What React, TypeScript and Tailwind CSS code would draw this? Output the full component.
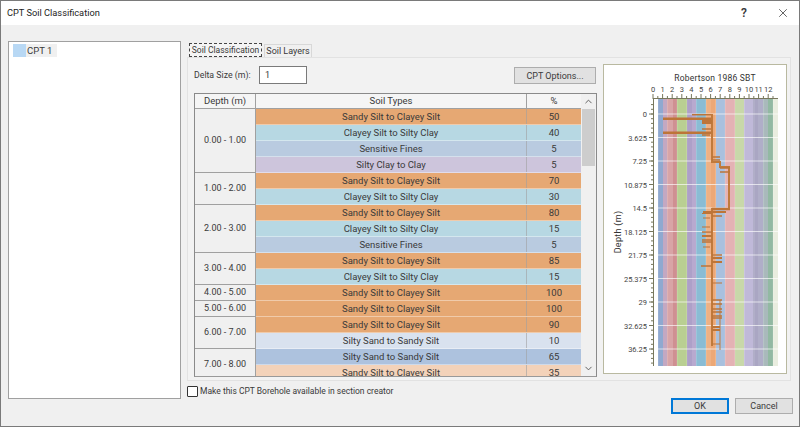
import { ChevronDown, ChevronUp, X } from "lucide-react";

const ORANGE = "bg-[#e6a873]";
const TEAL = "bg-[#b7d8e3]";
const STEEL = "bg-[#b9cbe0]";
const MAUVE = "bg-[#cdc5dc]";
const PALE = "bg-[#d9e2ef]";
const BLUE = "bg-[#adc2de]";
const PEACH = "bg-[#f3d2b9]";

const groups = [
  {
    depth: "0.00 - 1.00",
    rows: [
      { soil: "Sandy Silt to Clayey Silt", pct: "50", color: ORANGE },
      { soil: "Clayey Silt to Silty Clay", pct: "40", color: TEAL },
      { soil: "Sensitive Fines", pct: "5", color: STEEL },
      { soil: "Silty Clay to Clay", pct: "5", color: MAUVE },
    ],
  },
  {
    depth: "1.00 - 2.00",
    rows: [
      { soil: "Sandy Silt to Clayey Silt", pct: "70", color: ORANGE },
      { soil: "Clayey Silt to Silty Clay", pct: "30", color: TEAL },
    ],
  },
  {
    depth: "2.00 - 3.00",
    rows: [
      { soil: "Sandy Silt to Clayey Silt", pct: "80", color: ORANGE },
      { soil: "Clayey Silt to Silty Clay", pct: "15", color: TEAL },
      { soil: "Sensitive Fines", pct: "5", color: STEEL },
    ],
  },
  {
    depth: "3.00 - 4.00",
    rows: [
      { soil: "Sandy Silt to Clayey Silt", pct: "85", color: ORANGE },
      { soil: "Clayey Silt to Silty Clay", pct: "15", color: TEAL },
    ],
  },
  { depth: "4.00 - 5.00", rows: [{ soil: "Sandy Silt to Clayey Silt", pct: "100", color: ORANGE }] },
  { depth: "5.00 - 6.00", rows: [{ soil: "Sandy Silt to Clayey Silt", pct: "100", color: ORANGE }] },
  {
    depth: "6.00 - 7.00",
    rows: [
      { soil: "Sandy Silt to Clayey Silt", pct: "90", color: ORANGE },
      { soil: "Silty Sand to Sandy Silt", pct: "10", color: PALE },
    ],
  },
  {
    depth: "7.00 - 8.00",
    rows: [
      { soil: "Silty Sand to Sandy Silt", pct: "65", color: BLUE },
      { soil: "Sandy Silt to Clayey Silt", pct: "35", color: PEACH },
    ],
  },
];

// chart bands as [x, width, colour] in chart pixels
const bands: [number, number, string][] = [
  [54, 5, "#8fa9d0"],
  [59, 4, "#c3a8c2"],
  [63, 6, "#d8a4a6"],
  [69, 4, "#cf9092"],
  [73, 10, "#b9cf92"],
  [83, 5, "#ada0c8"],
  [88, 4, "#b8a9cf"],
  [92, 10, "#8abcd4"],
  [102, 5, "#eeb184"],
  [107, 5, "#eca877"],
  [112, 9, "#a9c0de"],
  [121, 10, "#e4b2b4"],
  [131, 9, "#c8d8a9"],
  [140, 9, "#c0b9d9"],
  [149, 5, "#aaa6c3"],
  [154, 5, "#b0aec8"],
  [159, 5, "#a9b9bb"],
  [164, 5, "#92b9a2"],
  [169, 5, "#e9eddf"],
];

const depthLabels = ["0", "3.625", "7.25", "10.875", "14.5", "18.125", "21.75", "25.375", "29", "32.625", "36.25"];

// horizontal spikes in the trace: [y, x1, x2, thickness]
const spikes: [number, number, number, number][] = [
  [48.7, 88, 107, 1.5],
  [52.7, 59, 107, 2.5],
  [56, 98, 108, 4],
  [63, 98, 107, 1.5],
  [66.7, 59, 107, 2.5],
  [69, 98, 106, 1.5],
  [91, 108, 116, 1.5],
  [94, 108, 116, 1.5],
  [102, 116, 126, 1.5],
  [106, 116, 126, 1.5],
  [143, 108, 126, 2.5],
  [146, 99, 122, 2],
  [147.5, 98, 108, 1],
  [150, 108, 118, 1.5],
  [152, 99, 106, 1],
  [161, 98, 106, 1],
  [166, 98, 108, 1.5],
  [170, 98, 108, 2],
  [174, 98, 108, 1.5],
  [176, 98, 108, 1.5],
  [181, 99, 106, 1],
  [189, 108, 118, 1.5],
  [192, 108, 118, 2],
  [196, 108, 118, 2],
  [200, 97, 108, 1.5],
  [217, 108, 118, 1],
  [234, 108, 118, 1.5],
  [238, 108, 118, 1.5],
  [243, 108, 118, 1.5],
  [246, 108, 118, 1.5],
  [250, 108, 118, 1.5],
  [252, 108, 118, 1.5],
  [261, 108, 116, 2],
  [264, 108, 116, 2],
  [278, 108, 116, 1],
];

const chartFont = "Roboto, sans-serif";

function SoilChart() {
  const tickXs = Array.from({ length: 13 }, (_, i) => 54 + i * 9.6);
  const gridYs = depthLabels.map((_, i) => 48 + i * 23.5);
  return (
    <svg width="182" height="307" viewBox="0 0 182 307" className="block">
      <text x="111" y="15" textAnchor="middle" fontSize="8.5" fill="#333" fontFamily={chartFont} letterSpacing="0.2">
        Robertson 1986 SBT
      </text>
      {bands.map(([x, w, c]) => (
        <rect key={x} x={x} y="33" width={w} height="267" fill={c} />
      ))}
      {tickXs.map((x) => (
        <line key={x} x1={x} x2={x} y1="33" y2="300" stroke="#fff" strokeOpacity="0.18" />
      ))}
      {gridYs.map((y) => (
        <line key={y} x1="54" x2="174" y1={y} y2={y} stroke="#fff" strokeOpacity="0.65" />
      ))}
      <line x1="49" x2="174" y1="32.5" y2="32.5" stroke="#77775c" />
      <line x1="49.5" x2="49.5" y1="33" y2="300" stroke="#77775c" />
      {tickXs.map((x, i) => (
        <g key={x}>
          <line x1={x - 5} x2={x - 5} y1="28" y2="33" stroke="#77775c" />
          <line x1={x - 0.2} x2={x - 0.2} y1="30" y2="33" stroke="#77775c" />
          <text x={x - 5} y="26" textAnchor="middle" fontSize="7.5" fill="#444" fontFamily={chartFont}>
            {i}
          </text>
        </g>
      ))}
      {Array.from({ length: 56 }, (_, i) => 38.6 + i * 4.7).map((y) => (
        <line key={y} x1="47" x2="49" y1={y} y2={y} stroke="#77775c" />
      ))}
      {depthLabels.map((d, i) => (
        <g key={d}>
          <line x1="45" x2="49" y1={gridYs[i]} y2={gridYs[i]} stroke="#77775c" />
          <text x="43" y={gridYs[i] + 3} textAnchor="end" fontSize="7.5" fill="#444" fontFamily={chartFont}>
            {d}
          </text>
        </g>
      ))}
      <text
        transform="translate(17 166) rotate(-90)"
        textAnchor="middle"
        fontSize="9"
        fill="#333"
        fontFamily={chartFont}
        letterSpacing="0.3"
      >
        Depth (m)
      </text>
      <polyline
        points="108,48 108,96 116,96 116,101 125,101 125,143 108,143 108,280"
        fill="none"
        stroke="#c07a3c"
        strokeWidth="2"
      />
      <line x1="116" x2="116" y1="234" y2="284" stroke="#c07a3c" strokeWidth="1" />
      {spikes.map(([y, x1, x2, t]) => (
        <line key={`${y}-${x1}`} x1={x1} x2={x2} y1={y} y2={y} stroke="#bd7538" strokeWidth={t} />
      ))}
    </svg>
  );
}

export default function App() {
  const font = { fontFamily: "Roboto, sans-serif" };
  return (
    <div
      style={font}
      className="w-[800px] h-[427px] flex flex-col overflow-hidden border border-[#7a7a7a] bg-[#f0f0f0] text-[9px] text-[#3a3a3a]"
    >
      {/* Title bar */}
      <div className="h-6 shrink-0 bg-white flex items-center pl-[6px]">
        <span className="flex-1 text-[9.25px] text-[#222]">CPT Soil Classification</span>
        <span className="w-4 text-center text-[12px] font-semibold mr-6">?</span>
        <X size={14} strokeWidth={1.2} className="mr-[9px] text-[#222]" />
      </div>

      <div className="flex-1 flex min-h-0 pt-4 pl-[7px] pr-[6px]">
        {/* Tree */}
        <div className="w-[173px] h-[358px] shrink-0 bg-white border border-[#a0a0a0] pt-[2px] pl-[4px]">
          <div className="flex items-center h-[13px]">
            <span className="w-[13px] h-[13px] bg-[#b8d8f4]" />
            <span className="bg-[#f0f0f0] h-[13px] pl-[1px] pr-[5px] leading-[13px] text-[9.5px]">CPT 1</span>
          </div>
        </div>

        <div className="flex-1 ml-[6px] flex flex-col">
          {/* Tabs */}
          <div className="flex h-[16px] items-end pl-[2px]">
            <div className="w-[73px] h-[14px] text-center whitespace-nowrap text-[8.5px] leading-[12px] bg-[#f4f4f4] border border-dashed border-[#444]">
              Soil Classification
            </div>
            <div className="w-[48px] h-[13px] text-center leading-[12px] ml-[2px] bg-[#f0f0f0] border border-b-0 border-[#d8d8d8]">
              Soil Layers
            </div>
          </div>

          <div className="w-[604px] h-[324px] border border-[#e2e2e2] bg-[#f2f2f2] flex pl-[6px]">
            <div className="w-[403px] shrink-0 flex flex-col">
              <div className="h-[35px] flex items-start pt-[8px]">
                <span className="w-[55px] mt-[3px] whitespace-nowrap text-[8.75px]">Delta Size (m):</span>
                <div className="w-[48px] h-[18px] ml-[10px] bg-white border border-[#7a7a7a] pl-[5px] leading-[16px]">1</div>
                <button className="w-[82px] h-[17px] mt-[1px] ml-auto mr-[1px] bg-[#e1e1e1] border border-[#adadad] leading-[14px]">
                  CPT Options...
                </button>
              </div>

              {/* Grid */}
              <div className="h-[284px] border border-[#8a8a8a] border-b-[#999] bg-white flex">
                <div className="flex-1 min-w-0 flex flex-col">
                  <div className="h-[15px] shrink-0 flex bg-[#f5f5f5] border-b border-[#a0a0a0] leading-[14px] text-center text-[9.5px]">
                    <div className="w-[61px] border-r border-[#a0a0a0]">Depth (m)</div>
                    <div className="flex-1 border-r border-[#a0a0a0]">Soil Types</div>
                    <div className="w-[54px]">%</div>
                  </div>
                  <div className="flex-1 min-h-0 overflow-hidden text-[9.5px]">
                    {groups.map((g) => (
                      <div key={g.depth} className="flex">
                        <div className="w-[61px] shrink-0 flex items-center justify-center bg-[#f0f0f0] border-r border-b border-[#a0a0a0] text-[9px]">
                          {g.depth}
                        </div>
                        <div className="flex-1 min-w-0">
                          {g.rows.map((r) => (
                            <div key={r.soil + r.pct} className={`h-4 flex text-center leading-[15px] border-b border-white/40 ${r.color}`}>
                              <div className="flex-1 whitespace-nowrap border-r border-[#a0a0a0]/60">{r.soil}</div>
                              <div className="w-[54px]">{r.pct}</div>
                            </div>
                          ))}
                        </div>
                      </div>
                    ))}
                  </div>
                </div>
                {/* Scrollbar */}
                <div className="w-[15px] shrink-0 flex flex-col items-center bg-[#f0f0f0]">
                  <div className="h-[15px] flex items-center">
                    <ChevronUp size={11} strokeWidth={2} className="text-[#555]" />
                  </div>
                  <div className="w-[13px] h-[57px] bg-[#cdcdcd]" />
                  <div className="flex-1" />
                  <div className="h-4 flex items-center">
                    <ChevronDown size={11} strokeWidth={2} className="text-[#555]" />
                  </div>
                </div>
              </div>
            </div>

            {/* Chart */}
            <div className="ml-[6px] mt-[6px] h-[310px] w-[184px] pt-[1px] bg-white border border-[#b9b9a0]">
              <SoilChart />
            </div>
          </div>

          {/* Checkbox */}
          <div className="h-[13px] mt-[4px] flex items-center">
            <span className="w-[11px] h-[11px] bg-white border border-[#333] rounded-[1px]" />
            <span className="ml-[2px] text-[8.5px] leading-[13px]">Make this CPT Borehole available in section creator</span>
          </div>

          {/* Buttons */}
          <div className="flex justify-end gap-[6px]">
            <button className="w-[58px] h-[16px] bg-[#e1e1e1] border-2 border-[#0078d7] leading-[12px]">OK</button>
            <button className="w-[58px] h-[16px] bg-[#e1e1e1] border border-[#adadad] leading-[14px]">Cancel</button>
          </div>
        </div>
      </div>
    </div>
  );
}
